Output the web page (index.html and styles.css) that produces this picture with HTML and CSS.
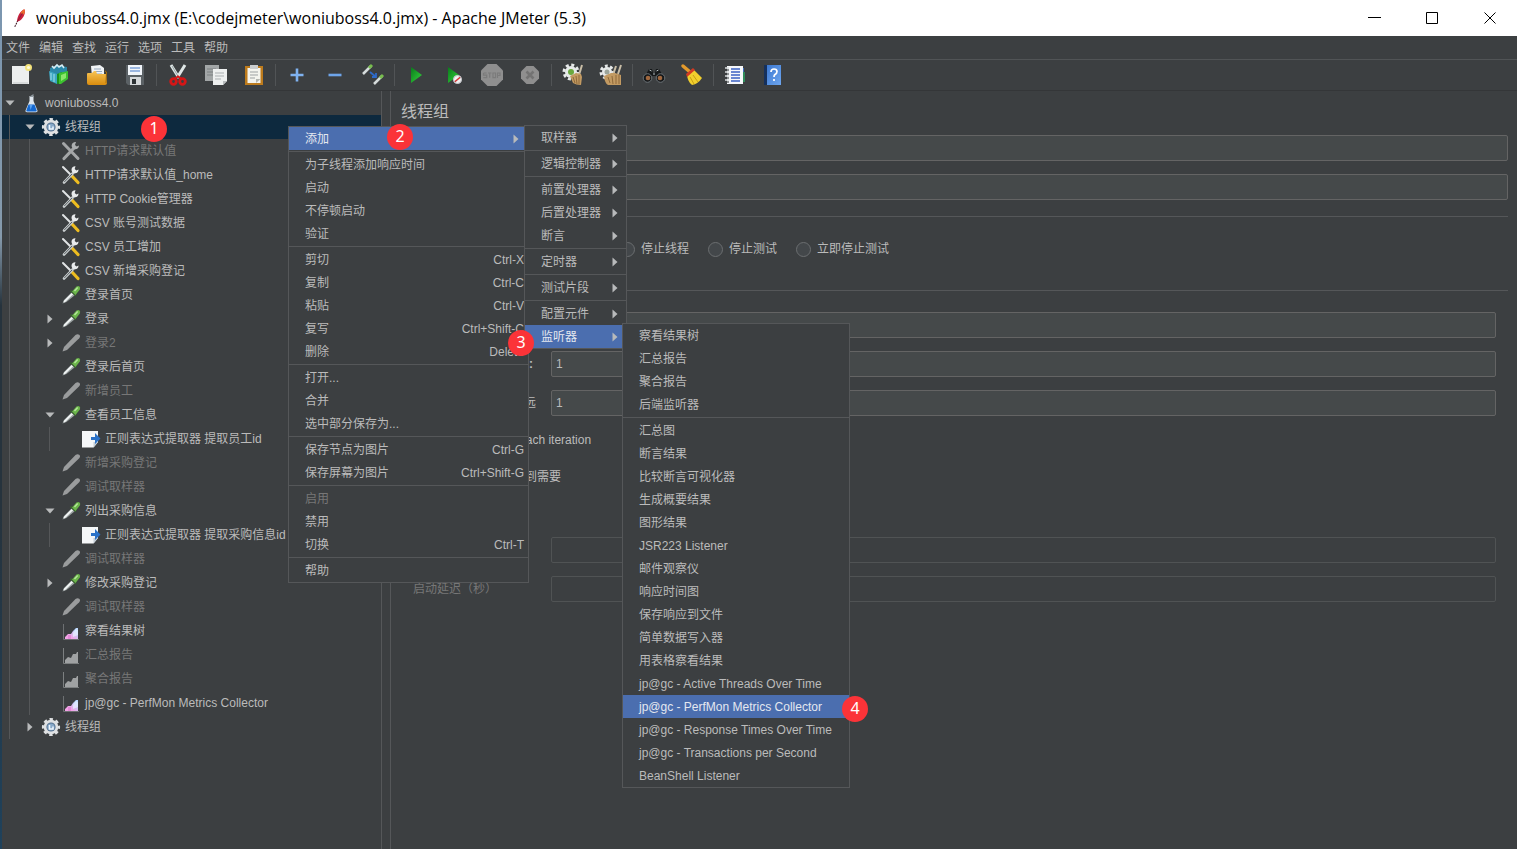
FILE: index.html
```html
<!DOCTYPE html>
<html lang="zh-CN">
<head>
<meta charset="utf-8">
<title>woniuboss4.0.jmx - Apache JMeter (5.3)</title>
<link rel="stylesheet" href="styles.css">
</head>
<body>
<svg class="defs" width="0" height="0" aria-hidden="true">
  <defs>
    <linearGradient id="gGreen" x1="0" y1="0" x2="1" y2="1"><stop offset="0" stop-color="#0a7a1c"/><stop offset="1" stop-color="#35d63c"/></linearGradient>
    <linearGradient id="gFolder" x1="0" y1="0" x2="0" y2="1"><stop offset="0" stop-color="#f7c455"/><stop offset="1" stop-color="#d98c0e"/></linearGradient>
    <linearGradient id="gBlue" x1="0" y1="0" x2="1" y2="1"><stop offset="0" stop-color="#3c78d0"/><stop offset="1" stop-color="#6ea6ef"/></linearGradient>
    <linearGradient id="gChart" x1="0" y1="1" x2="1" y2="0"><stop offset="0.3" stop-color="#f2a3e6"/><stop offset="0.8" stop-color="#b9d8ff"/></linearGradient>
    <symbol id="down" viewBox="0 0 10 10"><path d="M0.500 2.500h9L5 7.500z" fill="#b8babb"/></symbol>
    <symbol id="right" viewBox="0 0 10 10"><path d="M2.500 0.500v9L7.500 5z" fill="#b8babb"/></symbol>
    <symbol id="flask" viewBox="0 0 20 20"><path d="M8.500 3h4v5l4 9.500q.4 1.800-1.500 1.800H6q-2 0-1.500-1.800l4-9.500z" fill="#dfe7ee"/><path d="M7.500 11.500h6l2.200 6q.2 1-1 1H6.300q-1.200 0-1-1z" fill="#1568cf"/><path d="M8.500 12h3l-2 5z" fill="#5aa2f0"/><path d="M8.500 3.500L12.500 1v3h-4z" fill="#8f989e"/></symbol>
    <symbol id="gear" viewBox="0 0 20 20"><circle cx="10" cy="10" r="7.800" fill="none" stroke="#dfe1e3" stroke-width="2.600" stroke-dasharray="3.400 2.726" stroke-dashoffset="1.700"/><circle cx="10" cy="10" r="7.300" fill="#dfe1e3"/><circle cx="10" cy="10" r="4.600" fill="#54718f"/><circle cx="10" cy="10" r="3.600" fill="#87a8c8"/><path d="M8.500 8v4h3.500v-2.500" stroke="#eef5fc" fill="none" stroke-width="1.500"/></symbol>
    <symbol id="tools" viewBox="0 0 20 20"><path d="M2 2l7 7" stroke="#e1e4e5" stroke-width="2" stroke-linecap="round"/><path d="M10.500 10.500l6.500 7" stroke="#eebd20" stroke-width="3.200" stroke-linecap="round"/><path d="M3 17.500L13 7" stroke="#c7ccce" stroke-width="2.600" stroke-linecap="round"/><path d="M3.300 17L11 9" stroke="#5b6062" stroke-width="1"/><path d="M17.500 4.500a3.500 3.500 0 1 1-3-3.200L13.700 4l1.700 1.500z" fill="#e9ebec"/></symbol>
    <symbol id="tools-off" viewBox="0 0 20 20"><path d="M2.500 2.500l14.500 15" stroke="#a4a6a7" stroke-width="3" stroke-linecap="round"/><path d="M3 17.500L13.500 6.500" stroke="#a4a6a7" stroke-width="3.200" stroke-linecap="round"/><path d="M18 4.500a3.700 3.700 0 1 1-3-3.500L14 4l1.700 1.500z" fill="#adafb0"/></symbol>
    <symbol id="dropper" viewBox="0 0 20 20"><path d="M1.500 18.500l1.500-3.500L11 7l3 3-8.500 7z" fill="#9ca3a3"/><path d="M3 16.800l8.500-8.300" stroke="#f3f6f6" stroke-width="1.800"/><path d="M9.500 5.500l5.500 5" stroke="#3a5f30" stroke-width="2"/><path d="M11 6.500l4.500-5q1.800-1 3 0t.3 3L14.500 10z" fill="#6bb54a"/><path d="M13.500 6l3.200-3.500" stroke="#b5e69b" stroke-width="1.500"/></symbol>
    <symbol id="dropper-off" viewBox="0 0 20 20"><path d="M1.500 18.500l1.500-4.500L14.500 2q2-1.500 3.700-.3t0 3.500L6 17z" fill="#9a9c9d"/></symbol>
    <symbol id="extract" viewBox="0 0 20 20"><path d="M1 2h16v11l-4.500 5.500H1z" fill="#f5f7f8"/><path d="M12.500 18.500V13H17z" fill="#c3cdd5"/><path d="M10 8h4V4l5.500 5.500-5.500 5.500V11h-4z" fill="#2b72c8"/></symbol>
    <symbol id="chart" viewBox="0 0 20 20"><path d="M2.500 3v15.500H18" stroke="#6d7072" fill="none"/><path d="M4 18v-2l3-3h3l2-3 3-3h2v11z" fill="url(#gChart)"/><path d="M7 18v-4h3v4z" fill="#e58ad8"/><path d="M12 16v-4l3-4 2 1v5z" fill="#eaf2ff" opacity=".7"/></symbol>
    <symbol id="chart-off" viewBox="0 0 20 20"><path d="M2.500 3v15.500H18" stroke="#7d8081" fill="none"/><path d="M4 18v-3l3-3 3 1 2-4 3 0 1-2h1v11z" fill="#a0a2a3"/></symbol>
  </defs>
</svg>

<header class="titlebar">
  <svg class="feather" viewBox="0 0 16 22"><path d="M2 21l4-8" stroke="#3a1420" stroke-width="1.200" stroke-dasharray="2 1"/><path d="M4.500 15C5 9 8 3 13 1c1.500 3 0 8-3 11-1.500 1.500-3 2.500-5.500 3z" fill="#c8203c"/><path d="M8.500 5.500C10 3 11.500 1.700 13 1c.8 2 .5 4-.5 6z" fill="#f0702c"/><path d="M5 15l6-10" stroke="#7a1838" stroke-width=".8"/></svg>
  <h1 class="app-title">woniuboss4.0.jmx (E:\codejmeter\woniuboss4.0.jmx) - Apache JMeter (5.3)</h1>
  <div class="window-controls">
    <button aria-label="最小化"><svg viewBox="0 0 13 13"><path d="M0 5.500h13" stroke="#000"/></svg></button>
    <button aria-label="最大化"><svg viewBox="0 0 13 13"><path d="M.5.5h11v11H.5z" fill="none" stroke="#000"/></svg></button>
    <button aria-label="关闭"><svg viewBox="0 0 13 13"><path d="M.5.5l11 11M11.500.5l-11 11" stroke="#000"/></svg></button>
  </div>
</header>

<nav class="menubar">
  <button>文件</button><button>编辑</button><button>查找</button><button>运行</button><button>选项</button><button>工具</button><button>帮助</button>
</nav>

<div class="toolbar" role="toolbar">
  <button aria-label="新建"><svg viewBox="0 0 24 24"><path d="M3 3h17v18H3z" fill="#eceeee"/><path d="M4 20h15" stroke="#c4c8c9"/><circle cx="19.500" cy="4.500" r="3.500" fill="#f3e27a"/><circle cx="19.500" cy="4.500" r="1.600" fill="#fffbd8"/></svg></button>
  <button aria-label="模板"><svg viewBox="0 0 24 24"><path d="M3 5l7-3 10 2v6l-8 6-9-2z" fill="#2b87a8"/><path d="M5 3l2 2 3-3 2 2 3-2 2 3" stroke="#d7edf5" stroke-width="1.600" fill="none"/><path d="M2 8l8 3v10l-7-3z" fill="#3ea7c2"/><path d="M4 10v7M7 11v8" stroke="#a4dfec"/><path d="M10 11l5-2v11l-5 1z" fill="#1a8f1d"/><path d="M12 10l9-2v8l-7 5h-2z" fill="#3cc12f"/><path d="M14 12l5-2v5l-5 3z" fill="#8be56c"/></svg></button>
  <button aria-label="打开"><svg viewBox="0 0 24 24"><path d="M6 3l9-1 4 3v9H7z" fill="#f0f3f5"/><path d="M9 6h7M9 8.500h8M9 11h8" stroke="#97a8bd"/><path d="M2 11q0-1 1-1h4l2-2h2l1 3h9l1 9q0 2-2 2H4q-2 0-2-2z" fill="url(#gFolder)"/><path d="M20 8l1.500 1-.5 11" stroke="#a86d08" fill="none"/></svg></button>
  <button aria-label="保存"><svg viewBox="0 0 24 24"><path d="M3 2h18v20H5l-2-2z" fill="#5b6165"/><path d="M5 2h14v10H5z" fill="#f1f5fa"/><path d="M7 5h10M7 8h10" stroke="#7fa3d9" stroke-width="1.300"/><path d="M7 14h11v8H7z" fill="#d5d8da"/><path d="M9 16h4v5H9z" fill="#2d3235"/></svg></button>
  <span class="tool-sep"></span>
  <button aria-label="剪切"><svg viewBox="0 0 24 24"><path d="M5 2l8 13M19 2l-8 13" stroke="#dfe6e6" stroke-width="3"/><path d="M6 3l7 12" stroke="#98a4a5"/><circle cx="7.500" cy="18.500" r="2.800" fill="none" stroke="#d51616" stroke-width="2.800"/><circle cx="16.500" cy="18.500" r="2.800" fill="none" stroke="#d51616" stroke-width="2.800"/><path d="M9 15.500l3-2 3 2" stroke="#d51616" stroke-width="2" fill="none"/></svg></button>
  <button aria-label="复制"><svg viewBox="0 0 24 24"><path d="M1 2h14v16H1z" fill="#a2a6a7"/><path d="M3 6h9M3 9h6M3 12h6" stroke="#7d8182"/><path d="M9 6h14v12l-4 4H9z" fill="#eef0f0"/><path d="M11 10h9M11 13h9M11 16h6" stroke="#aaafb1"/><path d="M19 22v-4h4z" fill="#b9bdbe"/></svg></button>
  <button aria-label="粘贴"><svg viewBox="0 0 24 24"><path d="M3 3h18v19H3z" fill="#bd7b1c"/><path d="M5.500 5h13v15h-13z" fill="#f4f4ee"/><path d="M8 2h8v4H8z" fill="#c9cccd"/><path d="M8 9h8M8 12h8M8 15h5" stroke="#9da1a2"/><path d="M14 20v-4h4.500z" fill="#b4b6b0"/></svg></button>
  <span class="tool-sep"></span>
  <button aria-label="展开"><svg viewBox="0 0 24 24"><path d="M12 5.500v13M5.500 12h13" stroke="#7fb2f0" stroke-width="2.600"/></svg></button>
  <button aria-label="收起"><svg viewBox="0 0 24 24"><path d="M5.500 12h13" stroke="#6ea5ea" stroke-width="2.600"/></svg></button>
  <button aria-label="切换"><svg viewBox="0 0 24 24"><path d="M2 11l8-8" stroke="#d6dcdc" stroke-width="2.500"/><path d="M8 5l3-3" stroke="#78bd4f" stroke-width="3"/><path d="M13 21l8-8" stroke="#d6dcdc" stroke-width="2.500"/><path d="M19 15l3-3" stroke="#78bd4f" stroke-width="3"/><path d="M9 9l6 5m0-4v4h-4" stroke="#2e6ac8" stroke-width="1.800" fill="none"/></svg></button>
  <span class="tool-sep"></span>
  <button aria-label="启动"><svg viewBox="0 0 24 24"><path d="M7 4l11 8-11 8z" fill="url(#gGreen)"/></svg></button>
  <button aria-label="不停顿启动"><svg viewBox="0 0 24 24"><path d="M6 4l11 8-11 8z" fill="url(#gGreen)"/><circle cx="15.500" cy="16.500" r="4.300" fill="#f2f2f2"/><path d="M12.500 19l6-5" stroke="#d23434" stroke-width="1.600"/><circle cx="15.500" cy="16.500" r="4" fill="none" stroke="#bcbfc4"/></svg></button>
  <button aria-label="停止" disabled><svg viewBox="0 0 24 24"><path d="M7.500 1h9L23 7.500v9L16.500 23h-9L1 16.500v-9z" fill="#8f8f8f"/><path d="M3.500 10h3.200m-3.200 0v2.200h3.200v2.400H3.300M8 10h3.500M9.700 10v4.800M13 10h2.500v4.600H13zM17.500 15v-5H20v2.500h-2.500" fill="none" stroke="#7b7b7b" stroke-width="1.200"/></svg></button>
  <button aria-label="关闭" disabled><svg viewBox="0 0 24 24"><path d="M8.500 3h7L21 8.500v7L15.500 21h-7L3 15.500v-7z" fill="#8f8f8f"/><path d="M8.500 8.500l7 7M15.500 8.500l-7 7" stroke="#737373" stroke-width="2.600"/></svg></button>
  <span class="tool-sep"></span>
  <button aria-label="清除"><svg viewBox="0 0 24 24"><circle cx="10" cy="9" r="6" fill="#e7eaea"/><circle cx="10" cy="9" r="7" fill="none" stroke="#e7eaea" stroke-width="3" stroke-dasharray="3 2.500"/><circle cx="10" cy="9" r="3" fill="#69a83e"/><path d="M21 2l-3 10" stroke="#c8bda6" stroke-width="2"/><path d="M9 13l6-3 5 1 1 3-1 8q-5 0-8-2z" fill="#c29a62"/><path d="M12 14l2 6M15 13l1 8M18 12l0 9" stroke="#8e693a"/></svg></button>
  <button aria-label="清除全部"><svg viewBox="0 0 24 24"><circle cx="8" cy="9" r="5" fill="#e7eaea"/><circle cx="8" cy="9" r="6" fill="none" stroke="#e7eaea" stroke-width="3" stroke-dasharray="2.800 2.300"/><circle cx="8" cy="9" r="2.500" fill="#9ba49a"/><path d="M17 3l-3 9M22 2l-3 9" stroke="#c8bda6" stroke-width="2"/><path d="M5 13l7-3 4 0 6 2v10H9q-3-1-4-9z" fill="#c29a62"/><path d="M9 14l2 6M13 13l1 8M17 12v9M20 12v9" stroke="#8e693a"/></svg></button>
  <span class="tool-sep"></span>
  <button aria-label="查找"><svg viewBox="0 0 24 24"><path d="M3 13l4-7 3 0 1 4h2l1-4 3 0 4 7z" fill="#15181a"/><circle cx="5.500" cy="15" r="4.300" fill="#16191b" stroke="#6b7276"/><circle cx="18.500" cy="15" r="4.300" fill="#16191b" stroke="#6b7276"/><circle cx="6" cy="15" r="2.300" fill="#a0683f"/><circle cx="18" cy="15" r="2.300" fill="#a0683f"/><path d="M7.500 7l2 1M14.500 8l2-1M11 11h2" stroke="#b7c0c4"/></svg></button>
  <button aria-label="清除查找"><svg viewBox="0 0 24 24"><path d="M3 3l7 6" stroke="#e39a2c" stroke-width="3.500" stroke-linecap="round"/><path d="M7 11l6-5 9 9q-4 6-10 7Q7 18 7 11z" fill="#f1cf2d"/><path d="M6 11l7-6 2 2-8 7z" fill="#d23a22"/><path d="M10 14l4 7M13 12l5 7" stroke="#c79d12"/></svg></button>
  <span class="tool-sep"></span>
  <button aria-label="函数助手"><svg viewBox="0 0 24 24"><path d="M4 3h16v18H4z" fill="#f6f8fb"/><path d="M20 9h2v10h-2z" fill="#2f8a5a"/><path d="M20 5h1v4h-1z" fill="#3c6cc0"/><path d="M8 6h9M8 9h9M8 12h9M8 15h9M8 18h9" stroke="#3c62c4" stroke-width="1.300"/><path d="M2 5h4M2 9h4M2 13h4M2 17h4" stroke="#d8dbdd" stroke-width="1.600"/><path d="M4 7h2M4 11h2M4 15h2M4 19h2" stroke="#23282b"/></svg></button>
  <button aria-label="帮助"><svg viewBox="0 0 24 24"><path d="M3 2h3v20H3z" fill="#15305c"/><path d="M6 2h14v20H6z" fill="url(#gBlue)"/><path d="M10 9q0-3 3-3t3 2.500q0 2-2 3-1 .8-1 2.500M13 16v2" stroke="#fff" stroke-width="1.700" fill="none"/></svg></button>
</div>

<main class="workspace">
  <ul class="tree" role="tree">
    <li class="node"><svg class="toggle"><use href="#down"/></svg><svg class="icon"><use href="#flask"/></svg><span>woniuboss4.0</span></li>
    <li class="node selected"><i class="guide"></i><svg class="toggle"><use href="#down"/></svg><svg class="icon"><use href="#gear"/></svg><span>线程组</span></li>
    <li class="node off"><i class="guide"></i><i class="guide"></i><b class="toggle"></b><svg class="icon"><use href="#tools-off"/></svg><span>HTTP请求默认值</span></li>
    <li class="node"><i class="guide"></i><i class="guide"></i><b class="toggle"></b><svg class="icon"><use href="#tools"/></svg><span>HTTP请求默认值_home</span></li>
    <li class="node"><i class="guide"></i><i class="guide"></i><b class="toggle"></b><svg class="icon"><use href="#tools"/></svg><span>HTTP Cookie管理器</span></li>
    <li class="node"><i class="guide"></i><i class="guide"></i><b class="toggle"></b><svg class="icon"><use href="#tools"/></svg><span>CSV 账号测试数据</span></li>
    <li class="node"><i class="guide"></i><i class="guide"></i><b class="toggle"></b><svg class="icon"><use href="#tools"/></svg><span>CSV 员工增加</span></li>
    <li class="node"><i class="guide"></i><i class="guide"></i><b class="toggle"></b><svg class="icon"><use href="#tools"/></svg><span>CSV 新增采购登记</span></li>
    <li class="node"><i class="guide"></i><i class="guide"></i><b class="toggle"></b><svg class="icon"><use href="#dropper"/></svg><span>登录首页</span></li>
    <li class="node"><i class="guide"></i><i class="guide"></i><svg class="toggle"><use href="#right"/></svg><svg class="icon"><use href="#dropper"/></svg><span>登录</span></li>
    <li class="node off"><i class="guide"></i><i class="guide"></i><svg class="toggle"><use href="#right"/></svg><svg class="icon"><use href="#dropper-off"/></svg><span>登录2</span></li>
    <li class="node"><i class="guide"></i><i class="guide"></i><b class="toggle"></b><svg class="icon"><use href="#dropper"/></svg><span>登录后首页</span></li>
    <li class="node off"><i class="guide"></i><i class="guide"></i><b class="toggle"></b><svg class="icon"><use href="#dropper-off"/></svg><span>新增员工</span></li>
    <li class="node"><i class="guide"></i><i class="guide"></i><svg class="toggle"><use href="#down"/></svg><svg class="icon"><use href="#dropper"/></svg><span>查看员工信息</span></li>
    <li class="node"><i class="guide"></i><i class="guide"></i><i class="guide"></i><b class="toggle"></b><svg class="icon"><use href="#extract"/></svg><span>正则表达式提取器 提取员工id</span></li>
    <li class="node off"><i class="guide"></i><i class="guide"></i><b class="toggle"></b><svg class="icon"><use href="#dropper-off"/></svg><span>新增采购登记</span></li>
    <li class="node off"><i class="guide"></i><i class="guide"></i><b class="toggle"></b><svg class="icon"><use href="#dropper-off"/></svg><span>调试取样器</span></li>
    <li class="node"><i class="guide"></i><i class="guide"></i><svg class="toggle"><use href="#down"/></svg><svg class="icon"><use href="#dropper"/></svg><span>列出采购信息</span></li>
    <li class="node"><i class="guide"></i><i class="guide"></i><i class="guide"></i><b class="toggle"></b><svg class="icon"><use href="#extract"/></svg><span>正则表达式提取器 提取采购信息id</span></li>
    <li class="node off"><i class="guide"></i><i class="guide"></i><b class="toggle"></b><svg class="icon"><use href="#dropper-off"/></svg><span>调试取样器</span></li>
    <li class="node"><i class="guide"></i><i class="guide"></i><svg class="toggle"><use href="#right"/></svg><svg class="icon"><use href="#dropper"/></svg><span>修改采购登记</span></li>
    <li class="node off"><i class="guide"></i><i class="guide"></i><b class="toggle"></b><svg class="icon"><use href="#dropper-off"/></svg><span>调试取样器</span></li>
    <li class="node"><i class="guide"></i><i class="guide"></i><b class="toggle"></b><svg class="icon"><use href="#chart"/></svg><span>察看结果树</span></li>
    <li class="node off"><i class="guide"></i><i class="guide"></i><b class="toggle"></b><svg class="icon"><use href="#chart-off"/></svg><span>汇总报告</span></li>
    <li class="node off"><i class="guide"></i><i class="guide"></i><b class="toggle"></b><svg class="icon"><use href="#chart-off"/></svg><span>聚合报告</span></li>
    <li class="node"><i class="guide"></i><i class="guide"></i><b class="toggle"></b><svg class="icon"><use href="#chart"/></svg><span>jp@gc - PerfMon Metrics Collector</span></li>
    <li class="node"><i class="guide"></i><svg class="toggle"><use href="#right"/></svg><svg class="icon"><use href="#gear"/></svg><span>线程组</span></li>
  </ul>

  <section class="editor">
    <h2 class="editor-title">线程组</h2>
    <div class="row wide"><label for="name">名称：</label><input id="name" type="text"></div>
    <div class="row wide"><label for="note">注释：</label><input id="note" type="text"></div>
    <h3 class="group-title">在取样器错误后要执行的动作</h3>
    <div class="radios">
      <label><input type="radio" name="onerror">继续</label>
      <label><input type="radio" name="onerror">启动下一进程循环</label>
      <label><input type="radio" name="onerror">停止线程</label>
      <label><input type="radio" name="onerror">停止测试</label>
      <label><input type="radio" name="onerror">立即停止测试</label>
    </div>
    <h3 class="group-title">线程属性</h3>
    <div class="group">
      <div class="row"><label class="cell" for="threads">线程数：</label><input id="threads" type="text"></div>
      <div class="row"><label class="cell ramp" for="ramp"><span>Ramp-Up时间（秒）</span><b>:</b></label><input id="ramp" type="text" value="1"></div>
      <div class="row"><div class="cell"><label for="loops">循环次数</label><label class="check"><input type="checkbox">永远</label></div><input id="loops" type="text" value="1"></div>
    </div>
    <div class="checks">
      <label class="check"><input type="checkbox">Same user on each iteration</label>
      <label class="check"><input type="checkbox">延迟创建线程直到需要</label>
      <label class="check"><input type="checkbox">调度器</label>
    </div>
    <div class="group">
      <div class="row off"><label for="duration" class="cell">持续时间（秒）</label><input id="duration" type="text" disabled></div>
      <div class="row off"><label for="delay" class="cell">启动延迟（秒）</label><input id="delay" type="text" disabled></div>
    </div>
  </section>
</main>

<ul class="menu menu-context" role="menu">
  <li><button class="active">添加<svg class="more"><use href="#right"/></svg></button></li>
  <li class="sep"></li>
  <li><button>为子线程添加响应时间</button></li>
  <li><button>启动</button></li>
  <li><button>不停顿启动</button></li>
  <li><button>验证</button></li>
  <li class="sep"></li>
  <li><button>剪切<kbd>Ctrl-X</kbd></button></li>
  <li><button>复制<kbd>Ctrl-C</kbd></button></li>
  <li><button>粘贴<kbd>Ctrl-V</kbd></button></li>
  <li><button>复写<kbd>Ctrl+Shift-C</kbd></button></li>
  <li><button>删除<kbd>Delete</kbd></button></li>
  <li class="sep"></li>
  <li><button>打开...</button></li>
  <li><button>合并</button></li>
  <li><button>选中部分保存为...</button></li>
  <li class="sep"></li>
  <li><button>保存节点为图片<kbd>Ctrl-G</kbd></button></li>
  <li><button>保存屏幕为图片<kbd>Ctrl+Shift-G</kbd></button></li>
  <li class="sep"></li>
  <li><button disabled>启用</button></li>
  <li><button>禁用</button></li>
  <li><button>切换<kbd>Ctrl-T</kbd></button></li>
  <li class="sep"></li>
  <li><button>帮助</button></li>
</ul>

<ul class="menu menu-add" role="menu">
  <li><button>取样器<svg class="more"><use href="#right"/></svg></button></li>
  <li class="sep"></li>
  <li><button>逻辑控制器<svg class="more"><use href="#right"/></svg></button></li>
  <li class="sep"></li>
  <li><button>前置处理器<svg class="more"><use href="#right"/></svg></button></li>
  <li><button>后置处理器<svg class="more"><use href="#right"/></svg></button></li>
  <li><button>断言<svg class="more"><use href="#right"/></svg></button></li>
  <li class="sep"></li>
  <li><button>定时器<svg class="more"><use href="#right"/></svg></button></li>
  <li class="sep"></li>
  <li><button>测试片段<svg class="more"><use href="#right"/></svg></button></li>
  <li class="sep"></li>
  <li><button>配置元件<svg class="more"><use href="#right"/></svg></button></li>
  <li><button class="active">监听器<svg class="more"><use href="#right"/></svg></button></li>
</ul>

<ul class="menu menu-listener" role="menu">
  <li><button>察看结果树</button></li>
  <li><button>汇总报告</button></li>
  <li><button>聚合报告</button></li>
  <li><button>后端监听器</button></li>
  <li class="sep"></li>
  <li><button>汇总图</button></li>
  <li><button>断言结果</button></li>
  <li><button>比较断言可视化器</button></li>
  <li><button>生成概要结果</button></li>
  <li><button>图形结果</button></li>
  <li><button>JSR223 Listener</button></li>
  <li><button>邮件观察仪</button></li>
  <li><button>响应时间图</button></li>
  <li><button>保存响应到文件</button></li>
  <li><button>简单数据写入器</button></li>
  <li><button>用表格察看结果</button></li>
  <li><button>jp@gc - Active Threads Over Time</button></li>
  <li><button class="active">jp@gc - PerfMon Metrics Collector</button></li>
  <li><button>jp@gc - Response Times Over Time</button></li>
  <li><button>jp@gc - Transactions per Second</button></li>
  <li><button>BeanShell Listener</button></li>
</ul>

<span class="step step-1">1</span>
<span class="step step-2">2</span>
<span class="step step-3">3</span>
<span class="step step-4">4</span>
</body>
</html>
```
FILE: styles.css
```css
:root {
  --bg: #3c3f41;
  --text: #bbbbbb;
  --muted: #777777;
  --line: #555759;
  --field-line: #646464;
  --accent: #4b6eaf;
}

* { box-sizing: border-box; }

body {
  position: relative;
  display: flex;
  flex-direction: column;
  min-height: 100vh;
  margin: 0;
  border-left: 2px solid #2a4254;
  border-image: linear-gradient(#7b96b0, #8599ab 28%, #26333d 36%, #26333d 60%, #1f425c) 1;
  background: var(--bg);
  color: var(--text);
  font: 12px/16px "Liberation Sans", "Noto Sans CJK SC", sans-serif;
}

ul { margin: 0; padding: 0; list-style: none; }
button { padding: 0; border: 0; background: none; color: inherit; font: inherit; }
.defs { position: absolute; }

.titlebar { display: flex; align-items: center; height: 36px; padding-left: 11px; background: #fff; color: #000; }
.feather { width: 14px; height: 20px; }
.app-title { flex: 1; margin: 0; padding-left: 9px; font: 16px/22px "Open Sans", "Noto Sans", sans-serif; }
.window-controls { display: flex; gap: 4px; }
.window-controls button { width: 54px; height: 36px; }
.window-controls svg { display: block; width: 13px; height: 13px; margin: 0 auto; }

.menubar { display: flex; gap: 9px; height: 24px; padding-left: 4px; border-bottom: 1px solid #515456; }
.menubar button { line-height: 22px; }

.toolbar { display: flex; align-items: center; height: 31px; border-bottom: 1px solid #343638; }
.toolbar button { width: 38px; height: 30px; }
.toolbar svg { display: block; width: 24px; height: 24px; margin: 0 auto; }
.tool-sep { width: 1px; height: 22px; margin: 0 2px; background: #515456; }

.workspace { display: flex; flex: 1; gap: 8px; }

.tree { flex: 0 0 380px; border-right: 1px solid var(--line); }
.node { display: flex; align-items: center; height: 24px; white-space: nowrap; }
.node.selected { background: #0d293e; }
.node.off { color: var(--muted); }
.guide { flex: none; width: 20px; height: 24px; background: linear-gradient(var(--line), var(--line)) 7px 0 / 1px 100% no-repeat; }
.toggle { flex: none; width: 16px; height: 10px; }
.icon { flex: none; width: 20px; height: 20px; margin: 0 4px 0 3px; }

.editor { flex: 1; min-width: 0; padding: 11px 9px 0 10px; border-left: 1px solid var(--line); }
.editor-title { margin: 0 0 13px; font-size: 16px; font-weight: 400; line-height: 20px; }
.row { display: flex; align-items: center; margin-bottom: 13px; }
.row input { flex: 1; min-width: 0; height: 26px; padding: 0 4px; border: 1px solid var(--field-line); border-radius: 2px; background: #45494a; color: var(--text); font: inherit; }
.row.wide input { margin-left: 12px; }
.row.off { color: var(--muted); }
.row.off input { border-color: #505354; background: transparent; }
.row:last-child { margin-bottom: 0; }
.group { padding: 0 12px; }
.row .check input { flex: none; height: 15px; padding: 0; }
.cell { display: flex; flex: none; justify-content: space-between; width: 138px; padding-right: 15px; white-space: nowrap; }
.cell.ramp { padding-right: 18px; }

.group-title { display: flex; align-items: center; gap: 4px; margin: 0; font-size: 12px; font-weight: 400; line-height: 16px; }
.group-title::after { content: ""; flex: 1; height: 1px; background: var(--line); }
.row + .group-title { margin-top: -5px; }

.radios { display: flex; gap: 19px; margin: 15px 0 23px; padding-left: 19px; }
.radios label, .check { display: flex; align-items: center; gap: 6px; white-space: nowrap; }
.radios label { height: 20px; }
.radios + .group-title { margin-bottom: 14px; }
input[type="radio"], input[type="checkbox"] { flex: none; appearance: none; width: 15px; height: 15px; margin: 0; padding: 0; border: 1px solid #6b6e70; background: #43474a; }
input[type="radio"] { border-radius: 50%; }
input[type="checkbox"] { border-radius: 2px; }
.checks { display: grid; gap: 13px; margin: 12px 0 11px; padding-left: 19px; }
.checks .check { height: 24px; }

.menu { position: absolute; border: 1px solid var(--line); background: var(--bg); }
.menu button { display: flex; align-items: center; width: 100%; height: 23px; padding: 0 4px 0 16px; text-align: left; white-space: nowrap; }
.menu button:disabled { color: var(--muted); }
.menu .active { background: var(--accent); color: #e4e8ef; }
.menu .sep { height: 3px; background: linear-gradient(var(--line), var(--line)) 0 1px / 100% 1px no-repeat; }
.menu kbd { margin-left: auto; font: inherit; }
.more { width: 10px; height: 10px; margin-left: auto; }
.menu-context { top: 126px; left: 286px; width: 241px; }
.menu-context .more { margin-right: 3px; }
.menu-add { top: 125px; left: 522px; width: 103px; }
.menu-add .more { margin-right: 2px; }
.menu-listener { top: 323px; left: 620px; width: 228px; }

.step { position: absolute; width: 26px; height: 26px; border-radius: 50%; background: #fb3338; color: #fff; font: 16px/25px "Noto Sans", sans-serif; text-align: center; }
.step-1 { top: 116px; left: 139px; }
.step-2 { top: 124px; left: 385px; }
.step-3 { top: 330px; left: 506px; }
.step-4 { top: 696px; left: 840px; }
```
